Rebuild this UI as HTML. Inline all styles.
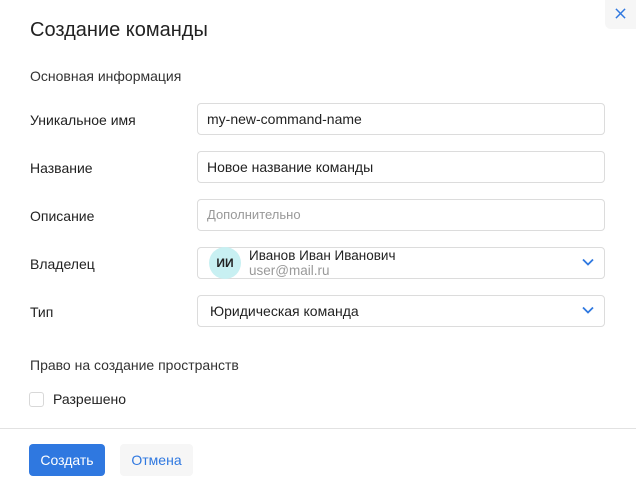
<!DOCTYPE html>
<html><head><meta charset="utf-8"><style>
*{box-sizing:border-box;margin:0;padding:0}
body{width:636px;height:488px;background:#fff;font-family:"Liberation Sans","DejaVu Sans",sans-serif;color:#222;position:relative;overflow:hidden;font-size:14px}
.a{position:absolute}
.lbl{position:absolute;left:30px;font-size:14px;color:#222}
.inp{position:absolute;left:197px;width:408px;height:32px;border:1px solid #dcdcdc;border-radius:4px;padding:0 9px;line-height:30px;font-size:14px}
.chev{position:absolute;right:10px;top:10px}
</style></head><body>
<div class="a" style="left:605px;top:0;width:31px;height:29px;background:#f6f6f6;border-bottom-left-radius:6px"></div>
<svg class="a" style="left:615px;top:8px" width="11" height="11" viewBox="0 0 12 12"><path d="M1 1L11 11M11 1L1 11" stroke="#2f78e0" stroke-width="1.6"/></svg>
<div class="a" style="left:30px;top:19px;font-size:20px;color:#222">Создание команды</div>
<div class="lbl" style="top:68px;color:#333">Основная информация</div>
<div class="lbl" style="top:112px">Уникальное имя</div>
<div class="inp" style="top:103px">my-new-command-name</div>
<div class="lbl" style="top:160px">Название</div>
<div class="inp" style="top:151px">Новое название команды</div>
<div class="lbl" style="top:208px">Описание</div>
<div class="inp" style="top:199px;color:#999;font-size:13px">Дополнительно</div>
<div class="lbl" style="top:256px">Владелец</div>
<div class="inp" style="top:247px">
 <div class="a" style="left:11px;top:-1px;width:32px;height:32px;border-radius:50%;background:#c8f0f2;font-size:12px;font-weight:bold;text-align:center;line-height:32px;color:#222">ИИ</div>
 <div class="a" style="left:51px;top:0px;line-height:16px;font-size:13.5px">Иванов Иван Иванович</div>
 <div class="a" style="left:51px;top:15px;line-height:16px;font-size:13.5px;color:#999">user@mail.ru</div>
 <svg class="chev" width="12" height="8" viewBox="0 0 12 8"><path d="M1 1.5L6 6.5L11 1.5" stroke="#2f78e0" stroke-width="1.8" fill="none"/></svg>
</div>
<div class="lbl" style="top:304px">Тип</div>
<div class="inp" style="top:295px;padding-left:12px">Юридическая команда
 <svg class="chev" width="12" height="8" viewBox="0 0 12 8"><path d="M1 1.5L6 6.5L11 1.5" stroke="#2f78e0" stroke-width="1.8" fill="none"/></svg>
</div>
<div class="lbl" style="top:357px;color:#333">Право на создание пространств</div>
<div class="a" style="left:29px;top:392px;width:15px;height:15px;border:1.5px solid #d8d8d8;border-radius:3px"></div>
<div class="a" style="left:53px;top:391px">Разрешено</div>
<div class="a" style="left:0;top:428px;width:636px;height:1px;background:#e2e2e2"></div>
<div class="a" style="left:29px;top:444px;width:76px;height:32px;background:#2f78e0;border-radius:4px;color:#fff;text-align:center;line-height:32px">Создать</div>
<div class="a" style="left:120px;top:444px;width:73px;height:32px;background:#f6f6f6;border-radius:4px;color:#2f78e0;text-align:center;line-height:32px">Отмена</div>
</body></html>
